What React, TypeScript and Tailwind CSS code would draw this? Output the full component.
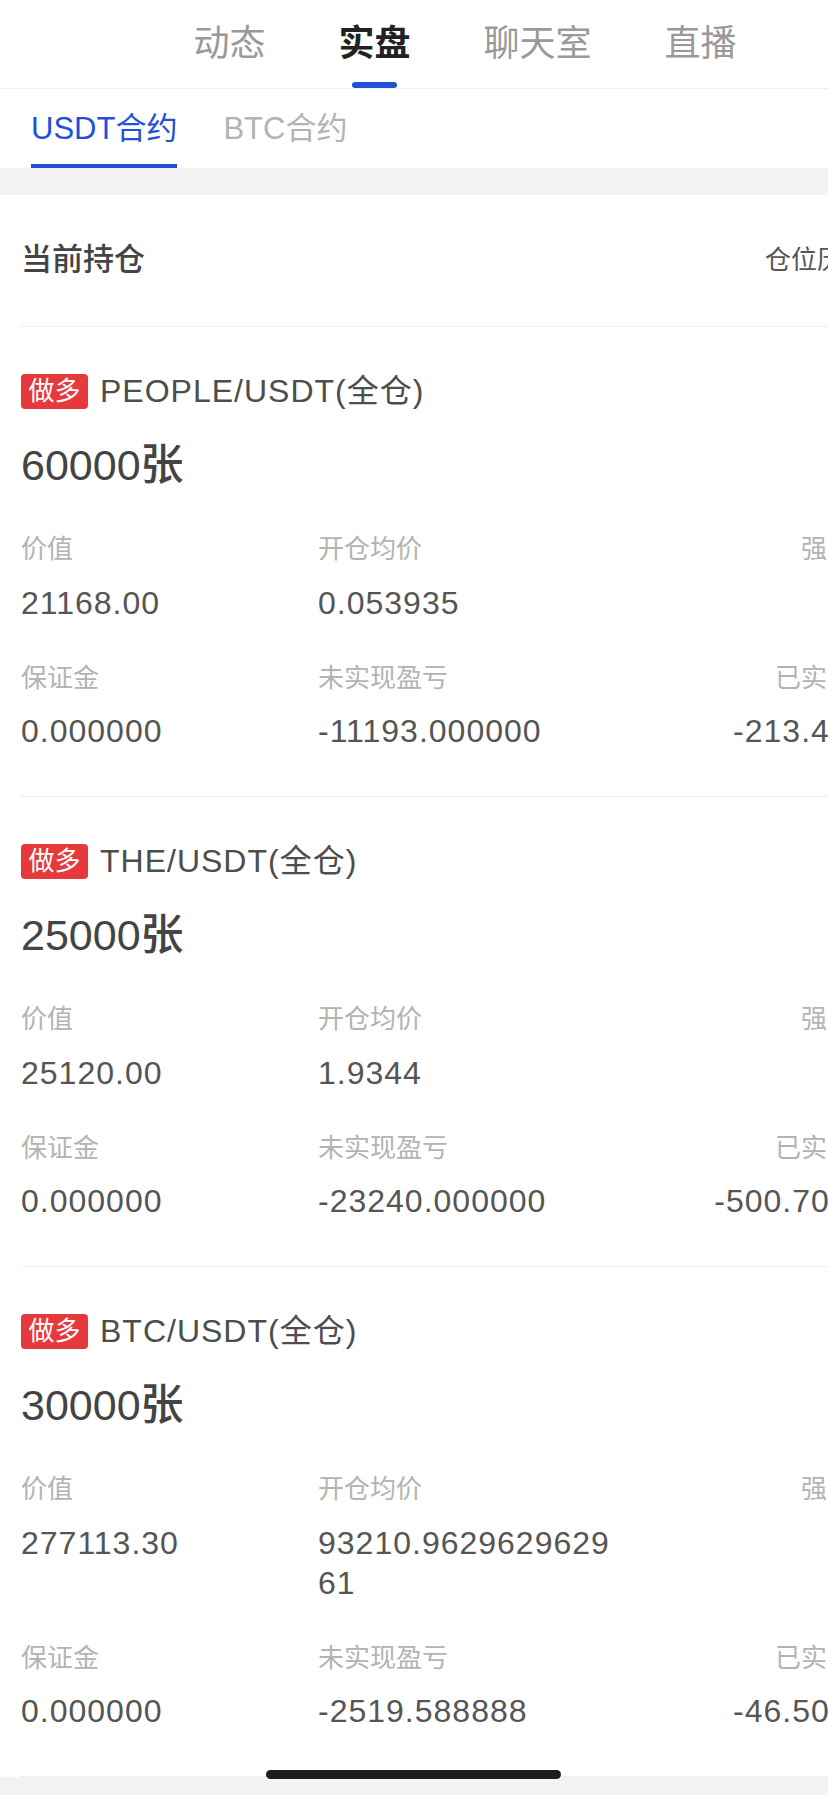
import React from "react";

type Pos = {
  pair: string;
  amount: string;
  value: string;
  open: string;
  liq: string;
  margin: string;
  upnl: string;
  rpnl: string;
};

const positions: Pos[] = [
  {
    pair: "PEOPLE/USDT(全仓)",
    amount: "60000张",
    value: "21168.00",
    open: "0.053935",
    liq: "--",
    margin: "0.000000",
    upnl: "-11193.000000",
    rpnl: "-213.46000",
  },
  {
    pair: "THE/USDT(全仓)",
    amount: "25000张",
    value: "25120.00",
    open: "1.9344",
    liq: "--",
    margin: "0.000000",
    upnl: "-23240.000000",
    rpnl: "-500.700000",
  },
  {
    pair: "BTC/USDT(全仓)",
    amount: "30000张",
    value: "277113.30",
    open: "93210.962962962961",
    liq: "--",
    margin: "0.000000",
    upnl: "-2519.588888",
    rpnl: "-46.500000",
  },
];

function Card({ p }: { p: Pos }) {
  return (
    <div className="pt-[46px] pb-[45px] border-b border-[#eeeeee]">
      <div className="flex items-center gap-[12px] h-[36px]">
        <div className="h-[35px] w-[67px] rounded-[4px] bg-[#e5393c] text-white text-[26px] leading-[35px] flex items-center justify-center">
          做多
        </div>
        <div className="text-[32px] tracking-[1px] text-[#4d4d4d] leading-[36px]">{p.pair}</div>
      </div>
      <div className="mt-[32px] h-[48px] text-[43px] leading-[48px] text-[#444444] font-medium">
        {p.amount}
      </div>
      <div className="mt-[45px] grid grid-cols-[297px_300px_1fr] text-[26px] leading-[30px] text-[#b3b3b3]">
        <div>价值</div>
        <div>开仓均价</div>
        <div className="text-right">强平价格</div>
      </div>
      <div className="mt-[19px] grid grid-cols-[297px_300px_1fr] text-[32px] tracking-[1px] leading-[40px] text-[#555555]">
        <div className="break-all">{p.value}</div>
        <div className="break-all">{p.open}</div>
        <div className="text-right">{p.liq}</div>
      </div>
      <div className="mt-[40px] grid grid-cols-[297px_300px_1fr] text-[26px] leading-[30px] text-[#b3b3b3]">
        <div>保证金</div>
        <div>未实现盈亏</div>
        <div className="text-right">已实现盈亏</div>
      </div>
      <div className="mt-[18px] grid grid-cols-[297px_300px_1fr] text-[32px] tracking-[1px] leading-[40px] text-[#555555]">
        <div className="break-all">{p.margin}</div>
        <div className="break-all">{p.upnl}</div>
        <div className="text-right whitespace-nowrap">{p.rpnl}</div>
      </div>
    </div>
  );
}

export default function App() {
  return (
    <div className="relative w-[828px] min-h-[1795px] overflow-hidden bg-[#f2f2f2] font-['Liberation_Sans','Noto_Sans_CJK_SC',sans-serif]">
      <div className="w-[930px]">
        {/* top tabs */}
        <div className="bg-white border-b border-[#f0f0f0] h-[89px]">
          <div className="flex justify-center gap-[73px] h-[88px]">
            <div className="flex flex-col items-center">
              <div className="h-[82px] leading-[80px] text-[36px] text-[#999999] font-['Noto_Sans_CJK_SC',sans-serif]">动态</div>
            </div>
            <div className="flex flex-col items-center">
              <div className="h-[82px] leading-[80px] text-[36px] text-[#222222] font-bold font-['Noto_Sans_CJK_SC',sans-serif]">实盘</div>
              <div className="h-[6px] w-[45px] rounded-full bg-[#2151d6]" />
            </div>
            <div className="flex flex-col items-center">
              <div className="h-[82px] leading-[80px] text-[36px] text-[#999999] font-['Noto_Sans_CJK_SC',sans-serif]">聊天室</div>
            </div>
            <div className="flex flex-col items-center">
              <div className="h-[82px] leading-[80px] text-[36px] text-[#999999] font-['Noto_Sans_CJK_SC',sans-serif]">直播</div>
            </div>
          </div>
        </div>

        {/* sub tabs */}
        <div className="bg-white h-[79px] px-[31px] flex gap-[46px]">
          <div className="flex flex-col">
            <div className="pt-[10px] h-[70px] leading-[60px] text-[31px] text-[#2151d6]">USDT合约</div>
            <div className="mt-[5px] h-[4px] bg-[#2151d6]" />
          </div>
          <div className="flex flex-col">
            <div className="pt-[10px] h-[70px] leading-[60px] text-[31px] text-[#b3b3b3]">BTC合约</div>
          </div>
        </div>

        {/* gray band */}
        <div className="h-[27px] bg-[#f2f2f2]" />

        {/* list */}
        <div className="bg-white pl-[21px] pr-[25px]">
          <div className="h-[132px] flex items-center justify-between border-b border-[#eeeeee]">
            <div className="text-[31px] text-[#444444] font-medium">当前持仓</div>
            <div className="flex items-center gap-[12px] text-[26px] text-[#555555]">
              <span>仓位历史</span>
              <svg width="24" height="24" viewBox="0 0 24 24" fill="none" stroke="#999" strokeWidth="2">
                <path d="M9 5l7 7-7 7" />
              </svg>
            </div>
          </div>
          {positions.map((p, i) => (
            <Card key={i} p={p} />
          ))}
        </div>
      </div>

      {/* home indicator */}
      <div className="absolute left-[266px] top-[1770px] w-[295px] h-[9px] rounded-full bg-[#1c1c1c]" />
    </div>
  );
}
